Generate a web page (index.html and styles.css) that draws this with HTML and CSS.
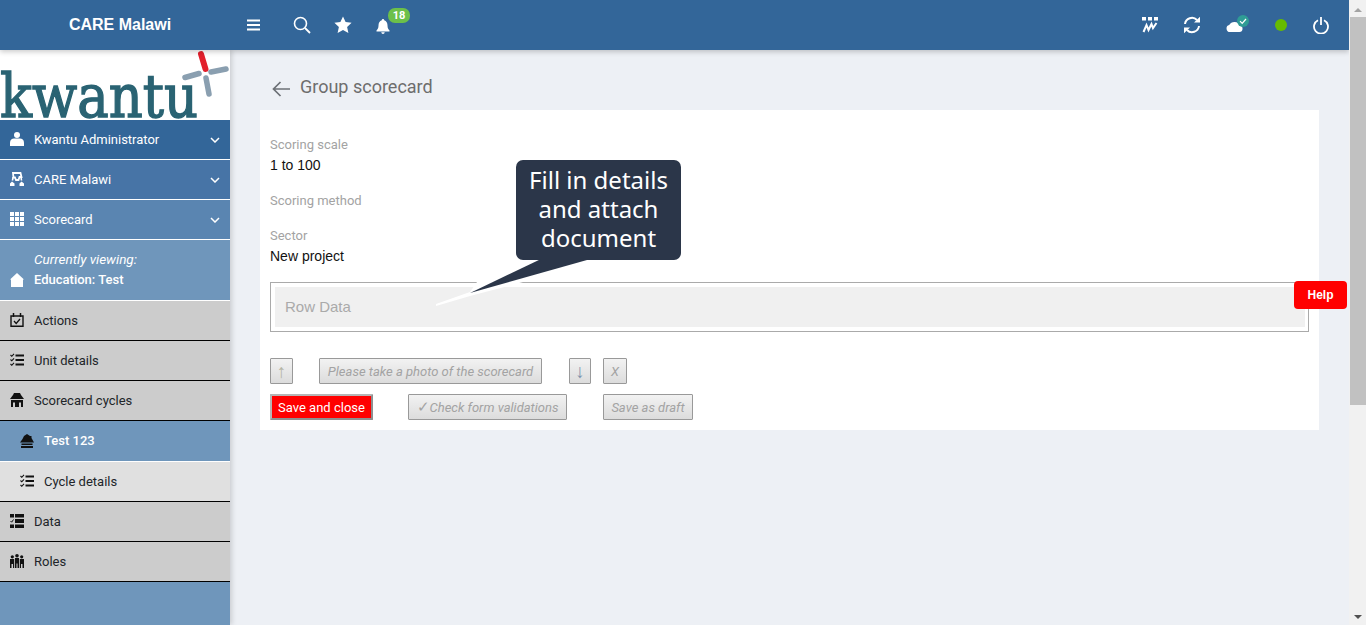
FILE: index.html
```html
<!DOCTYPE html>
<html lang="en">
<head>
  <meta charset="UTF-8">
  <title>Group scorecard</title>
  <link rel="stylesheet" href="styles.css">
</head>
<body>
  <div class="app">
    <div class="window">
      <header class="topbar">
        <div class="brand">CARE Malawi</div>
        <div class="top-left">
          <svg class="ico-menu" viewBox="0 0 13 12"><path d="M0 1.500h13M0 6h13M0 10.500h13" stroke="#fff" stroke-width="2"/></svg>
          <svg class="ico-search" viewBox="0 0 18 18"><circle cx="7.500" cy="7.500" r="6" fill="none" stroke="#fff" stroke-width="1.600"/><path d="M12 12l5 5" stroke="#fff" stroke-width="1.800"/></svg>
          <svg class="ico-star" viewBox="0 0 18 18"><path d="M9 .5l2.600 5.600 6 .7-4.500 4.100 1.300 6.100L9 14l-5.400 3 1.300-6.100L.4 6.800l6-.7z" fill="#fff"/></svg>
          <div class="bell">
            <svg class="ico-bell" viewBox="0 0 14 15"><path d="M7 0c.8 0 1.200.6 1.200 1.300C10.500 2 11.500 4 11.500 6.500c0 2.500.8 3.800 2 5v1H.5v-1c1.200-1.200 2-2.500 2-5C2.500 4 3.500 2 5.800 1.300 5.800.6 6.200 0 7 0zM5.300 13.300h3.400C8.600 14.300 7.900 15 7 15s-1.600-.7-1.700-1.700z" fill="#fff"/></svg>
            <span class="badge">18</span>
          </div>
        </div>
        <div class="top-right">
          <svg class="ico-chart" viewBox="0 0 16 16"><path d="M0 0h4v3.500H0zM6 0h4v3.500H6zM12 0h4v3.500h-4z" fill="#fff"/><path d="M1.500 15l3-7 2 5 3-6 1.500 4 3.500-5" fill="none" stroke="#fff" stroke-width="2"/></svg>
          <svg class="ico-sync" viewBox="0 0 18 18"><path d="M2 8a7 7 0 0 1 12-4M16 10a7 7 0 0 1-12 4" fill="none" stroke="#fff" stroke-width="2"/><path d="M11 6.500h6V.8zM7 11.500H1v5.700z" fill="#fff"/></svg>
          <div class="cloud">
            <svg class="ico-cloud" viewBox="0 0 17 11"><path d="M4 11a3.500 3.500 0 0 1-.8-6.900A6 6 0 0 1 14 4.500 3.300 3.300 0 0 1 13.500 11z" fill="#fff"/></svg>
            <svg class="ico-check" viewBox="0 0 12 12"><circle cx="6" cy="6" r="6" fill="#2f9c95"/><path d="M3 6.200l2.200 2.200L9 4" fill="none" stroke="#fff" stroke-width="1.200"/></svg>
          </div>
          <span class="status-dot"></span>
          <svg class="ico-power" viewBox="0 0 16 17"><path d="M5 3.300a7 7 0 1 0 6 0" fill="none" stroke="#fff" stroke-width="1.800"/><path d="M8 0v8" stroke="#fff" stroke-width="1.800"/></svg>
        </div>
      </header>

      <div class="body-row">
        <aside class="sidebar">
          <div class="logo">
            <svg viewBox="0 0 230 70" width="230" height="70">
              <text x="0" y="67" class="logo-text" textLength="198" lengthAdjust="spacingAndGlyphs">kwantu</text>
              <path d="M201 4l4.500 15" stroke="#e2202c" stroke-width="6" stroke-linecap="round"/>
              <path d="M185 27.500l14-4M211 22l15-3M206 28l3 16" stroke="#8a9fb0" stroke-width="5.500" stroke-linecap="round"/>
            </svg>
          </div>
          <nav class="menu">
            <a class="item dark-1">
              <svg class="ico" viewBox="0 0 14 14"><circle cx="7" cy="3" r="3" fill="#fff"/><path d="M0 14v-3.500C0 8 2 6.500 4 6.500h6c2 0 4 1.500 4 4V14z" fill="#fff"/></svg>
              <span class="label">Kwantu Administrator</span>
              <svg class="chev" viewBox="0 0 10 6"><path d="M1 1l4 4 4-4" fill="none" stroke="#fff" stroke-width="1.500"/></svg>
            </a>
            <a class="item dark-2">
              <svg class="ico" viewBox="0 0 14 14"><path d="M3 1h7.500l1 4H9.500L8.500 8H6L5 5.500 3.500 5.500z" fill="none" stroke="#fff" stroke-width="1.800"/><path d="M0 14v-2.500l2-2 2.500 2V14zM9.500 14v-2.500l2-2 2.500 2V14z" fill="#fff"/><path d="M3 5l-.5 3.500M11 5l.5 3.500" stroke="#fff" stroke-width="1.600"/></svg>
              <span class="label">CARE Malawi</span>
              <svg class="chev" viewBox="0 0 10 6"><path d="M1 1l4 4 4-4" fill="none" stroke="#fff" stroke-width="1.500"/></svg>
            </a>
            <a class="item dark-3">
              <svg class="ico" viewBox="0 0 14 14"><path d="M0 0h4v4H0zM5 0h4v4H5zM10 0h4v4h-4zM0 5h4v4H0zM5 5h4v4H5zM10 5h4v4h-4zM0 10h4v4H0zM5 10h4v4H5zM10 10h4v4h-4z" fill="#fff"/></svg>
              <span class="label">Scorecard</span>
              <svg class="chev" viewBox="0 0 10 6"><path d="M1 1l4 4 4-4" fill="none" stroke="#fff" stroke-width="1.500"/></svg>
            </a>
            <div class="item current">
              <svg class="ico" viewBox="0 0 14 14"><path d="M7 0l7 6.500h-1V14H1V6.500H0z" fill="#fff"/></svg>
              <div class="current-text">
                <em>Currently viewing:</em>
                <span>Education: Test</span>
              </div>
            </div>
            <a class="item grey">
              <svg class="ico" viewBox="0 0 14 14"><path d="M1 3h12v10.300H1z" fill="none" stroke="#111" stroke-width="1.400"/><path d="M3.500 0v4M10.500 0v4" stroke="#111" stroke-width="1.500"/><path d="M4 8l2.200 2.500L10 6" fill="none" stroke="#111" stroke-width="1.300"/></svg>
              <span class="label">Actions</span>
            </a>
            <a class="item grey">
              <svg class="ico" viewBox="0 0 14 14"><use href="#checklist"/></svg>
              <span class="label">Unit details</span>
            </a>
            <a class="item grey">
              <svg class="ico" viewBox="0 0 14 14"><use href="#shop"/></svg>
              <span class="label">Scorecard cycles</span>
            </a>
            <a class="item sub active">
              <svg class="ico" viewBox="0 0 14 14"><use href="#shop2"/></svg>
              <span class="label">Test 123</span>
            </a>
            <a class="item sub light">
              <svg class="ico" viewBox="0 0 14 14"><use href="#checklist"/></svg>
              <span class="label">Cycle details</span>
            </a>
            <a class="item grey">
              <svg class="ico" viewBox="0 0 14 14"><path d="M0 0h4v3.500H0zM5 0h9v3.500H5zM5 5h9v4H5zM0 10.500h4V14H0zM5 10.500h9V14H5z" fill="#111"/><path d="M.5 7l1.200 1.200L3.500 5.500" fill="none" stroke="#111"/></svg>
              <span class="label">Data</span>
            </a>
            <a class="item grey">
              <svg class="ico" viewBox="0 0 14 14"><circle cx="2.300" cy="2.800" r="1.600" fill="#111"/><circle cx="7" cy="1.800" r="1.800" fill="#111"/><circle cx="11.700" cy="2.800" r="1.600" fill="#111"/><path d="M0 5h4.200v9H3V10H1.500v4H0zM5 4h4v10H7.500V9.500h-1V14H5zM9.800 5H14v9h-1.500V10H11v4H9.800z" fill="#111"/></svg>
              <span class="label">Roles</span>
            </a>
          </nav>
        </aside>

        <main class="content">
          <div class="page-head">
            <svg class="ico-back" viewBox="0 0 18 16"><path d="M18 8H2M8.500 1L1.500 8l7 7" fill="none" stroke="#6c7075" stroke-width="1.700"/></svg>
            <h1>Group scorecard</h1>
          </div>
          <section class="panel">
            <div class="field">
              <div class="field-label">Scoring scale</div>
              <div class="field-value">1 to 100</div>
            </div>
            <div class="field">
              <div class="field-label">Scoring method</div>
            </div>
            <div class="field">
              <div class="field-label">Sector</div>
              <div class="field-value">New project</div>
            </div>
            <div class="row-data">
              <div class="row-data-inner">Row Data</div>
            </div>
            <div class="btn-row first">
              <button class="btn up">↑</button>
              <button class="btn photo">Please take a photo of the scorecard</button>
              <button class="btn down">↓</button>
              <button class="btn close">X</button>
            </div>
            <div class="btn-row">
              <button class="btn save">Save and close</button>
              <button class="btn check"><span class="tick">✓</span>Check form validations</button>
              <button class="btn draft">Save as draft</button>
            </div>
          </section>
          <button class="help">Help</button>
          <div class="callout">
            Fill in details<br>and attach<br>document
            <svg class="callout-tail" viewBox="0 0 165 55" width="165" height="55">
              <path d="M6 49v2L40 41 93 27H47L40 37z" fill="#fff"/>
              <path d="M111 4h46v1L40 38z" fill="#2b3649"/>
            </svg>
          </div>
        </main>
      </div>
    </div>
    <div class="scrollbar">
      <span class="arrow-up"></span>
      <span class="thumb"></span>
      <span class="arrow-down"></span>
    </div>
  </div>

  <svg class="defs" width="0" height="0">
    <defs>
      <g id="checklist">
        <path d="M5.500 2.500H14M5.500 7H14M5.500 11.500H14" stroke="#111" stroke-width="1.800"/>
        <path d="M.5 2l1.300 1.300L4 .8M.5 6.500l1.300 1.300L4 5.300M.5 11l1.300 1.300L4 9.800" fill="none" stroke="#111" stroke-width="1.100"/>
      </g>
      <g id="shop">
        <path d="M4 0h6l1 2 3 4H0l3-4z" fill="#111"/>
        <path d="M1 7h12v7h-2v-4.500H9V14H5V9.500H3V14H1z" fill="#111"/>
      </g>
      <g id="shop2">
        <path d="M7 0l3 2h1.500v2l2.500 4.500H0L2.500 5 4 2z" fill="#111"/>
        <path d="M1.500 9.500h11V11h-11zM1 12h12v2H1z" fill="#111"/>
      </g>
    </defs>
  </svg>
</body>
</html>
```

FILE: styles.css
```css
* { box-sizing: border-box; }
html, body { margin: 0; height: 100%; overflow: hidden; }
body { font-family: Roboto, "Liberation Sans", Arial, sans-serif; font-size: 14px; color: #212529; background: #edf0f5; }
svg { display: block; flex: none; }
.defs { position: absolute; }

.app { display: flex; height: 625px; }
.window { flex: 1; display: flex; flex-direction: column; min-width: 0; }

/* top bar */
.topbar { height: 50px; background: #336699; display: flex; align-items: center; color: #fff; box-shadow: 0 2px 5px rgba(0,0,0,.2); position: relative; z-index: 2; }
.brand { width: 240px; text-align: center; font-family: "Liberation Sans", Arial, sans-serif; font-weight: bold; font-size: 16px; }
.top-left { display: flex; align-items: center; }
.ico-menu { width: 13px; height: 12px; margin-left: 7px; }
.ico-search { width: 18px; height: 18px; margin-left: 33px; }
.ico-star { width: 18px; height: 18px; margin-left: 23px; }
.bell { position: relative; margin-left: 24px; margin-top: 2px; }
.ico-bell { width: 14px; height: 15px; }
.badge { position: absolute; left: 12px; top: -11px; width: 22px; height: 15px; border-radius: 7px; background: #6cc04a; font-size: 11px; font-weight: 700; line-height: 15px; text-align: center; }
.top-right { margin-left: auto; display: flex; align-items: center; }
.ico-chart { width: 16px; height: 16px; margin-right: 25px; }
.ico-sync { width: 18px; height: 18px; margin-right: 25px; }
.cloud { position: relative; width: 17px; height: 11px; margin-right: 32px; margin-top: 2px; }
.ico-cloud { width: 17px; height: 11px; }
.ico-check { position: absolute; left: 11px; top: -6px; width: 12px; height: 12px; }
.status-dot { width: 12px; height: 12px; border-radius: 50%; background: #66bb00; margin-right: 26px; margin-top: -1px; }
.ico-power { width: 16px; height: 17px; margin-right: 20px; }

.body-row { flex: 1; display: flex; min-height: 0; }

/* sidebar */
.sidebar { width: 230px; background: #6f96bb; box-shadow: 2px 0 5px rgba(0,0,0,.15); position: relative; z-index: 1; }
.logo { height: 70px; background: #fff; }
.logo svg { overflow: visible; }
.logo-text { font-family: "DejaVu Serif", serif; font-size: 60px; fill: #2a6373; stroke: #2a6373; stroke-width: 1.4px; }
.item { display: flex; align-items: center; height: 40px; padding-left: 10px; padding-bottom: 1px; font-size: 13px; border-bottom: 1px solid #fff; color: #fff; position: relative; }
.ico { width: 14px; height: 14px; margin-right: 10px; }
.label { flex: 1; }
.chev { width: 10px; height: 6px; margin-right: 10px; margin-top: 1px; }
.dark-1 { background: #336699; }
.dark-2 { background: #4774a6; }
.dark-3 { background: #5a85b1; }
.current { height: 61px; background: #6f96bb; padding-bottom: 0; }
.current .ico { margin-top: 20px; }
.current-text { display: flex; flex-direction: column; gap: 5px; margin-top: -3px; }
.current-text em { font-size: 13.5px; }
.current-text span { font-weight: 500; }
.grey { background: #cccccc; color: #212529; border-bottom-color: #000; }
.sub { padding-left: 20px; }
.active { height: 41px; background: #6f96bb; font-weight: 500; border-bottom: 1px solid #fff; }
.light { background: #e0e0e0; color: #212529; border-bottom-color: #000; }

/* content */
.content { flex: 1; position: relative; padding: 0 30px; min-width: 0; }
.page-head { height: 60px; display: flex; align-items: center; padding: 13px 0 0 12px; }
.ico-back { width: 18px; height: 16px; margin: 5px 10px 0 0; }
h1 { margin: 0; font-size: 18px; font-weight: 400; color: #6d6d6d; }
.panel { background: #fff; height: 320px; padding: 24px 10px 0; }
.field { margin-bottom: 15px; }
.field-label { height: 20px; line-height: 22px; font-size: 13px; color: #a3a3a3; }
.field-value { height: 20px; line-height: 21px; margin-top: 1px; color: #111; font-family: "Liberation Sans", Arial, sans-serif; }
.row-data { height: 50px; border: 1px solid #aaa; padding: 4px 3px 4px 4px; margin-top: 16px; }
.row-data-inner { height: 40px; background: #f0f0f0; color: #aaa; font-size: 15px; line-height: 39px; padding-left: 10px; font-family: "Liberation Sans", Arial, sans-serif; }
.btn-row { display: flex; margin-top: 10px; }
.btn-row.first { margin-top: 26px; }
.btn { height: 26px; padding: 0; font-family: inherit; font-size: 13px; font-style: italic; color: #a3a3a3; background: linear-gradient(#f2f2f2, #dcdcdc); border: 1px solid #999; border-radius: 1px; }
.up { width: 23px; margin-right: 26px; font-style: normal; font-size: 19px; font-weight: 300; color: #b5b5a5; }
.photo { width: 223px; margin-right: 27px; }
.down { width: 22px; margin-right: 12px; font-style: normal; font-size: 19px; font-weight: 300; color: #7f93ad; }
.close { width: 24px; }
.save { width: 103px; margin-right: 35px; font-style: normal; color: #fff; background: #ff0000; border: 2px solid #8f8f8f; border-top-color: #b5b5b5; border-left-color: #b5b5b5; }
.check { width: 159px; margin-right: 36px; }
.tick { font-size: 15px; font-style: normal; }
.draft { width: 90px; }
.help { position: absolute; left: 1064px; top: 231px; width: 53px; height: 28px; border: 0; border-radius: 4px; background: #ff0000; color: #fff; font-family: "Liberation Sans", Arial, sans-serif; font-size: 12px; font-weight: bold; padding: 0; }
.callout { position: absolute; left: 286px; top: 110px; width: 165px; height: 100px; padding-top: 5px; border-radius: 7px; background: #2b3649; color: #fff; font-family: "Noto Sans", sans-serif; font-size: 24px; line-height: 29px; text-align: center; }
.callout-tail { position: absolute; left: -86px; top: 95px; }

/* scrollbar */
.scrollbar { width: 17px; background: #f1f1f1; display: flex; flex-direction: column; align-items: center; position: relative; z-index: 3; }
.arrow-up { margin: 8px 0 5px; width: 0; height: 0; border: 4px solid transparent; border-top: 0; border-bottom: 4px solid #a3a3a3; }
.thumb { width: 100%; margin-left: 2px; height: 388px; background: #c1c1c1; }
.arrow-down { margin-top: auto; margin-bottom: 6px; width: 0; height: 0; border: 4px solid transparent; border-bottom: 0; border-top: 4px solid #505050; }
```
